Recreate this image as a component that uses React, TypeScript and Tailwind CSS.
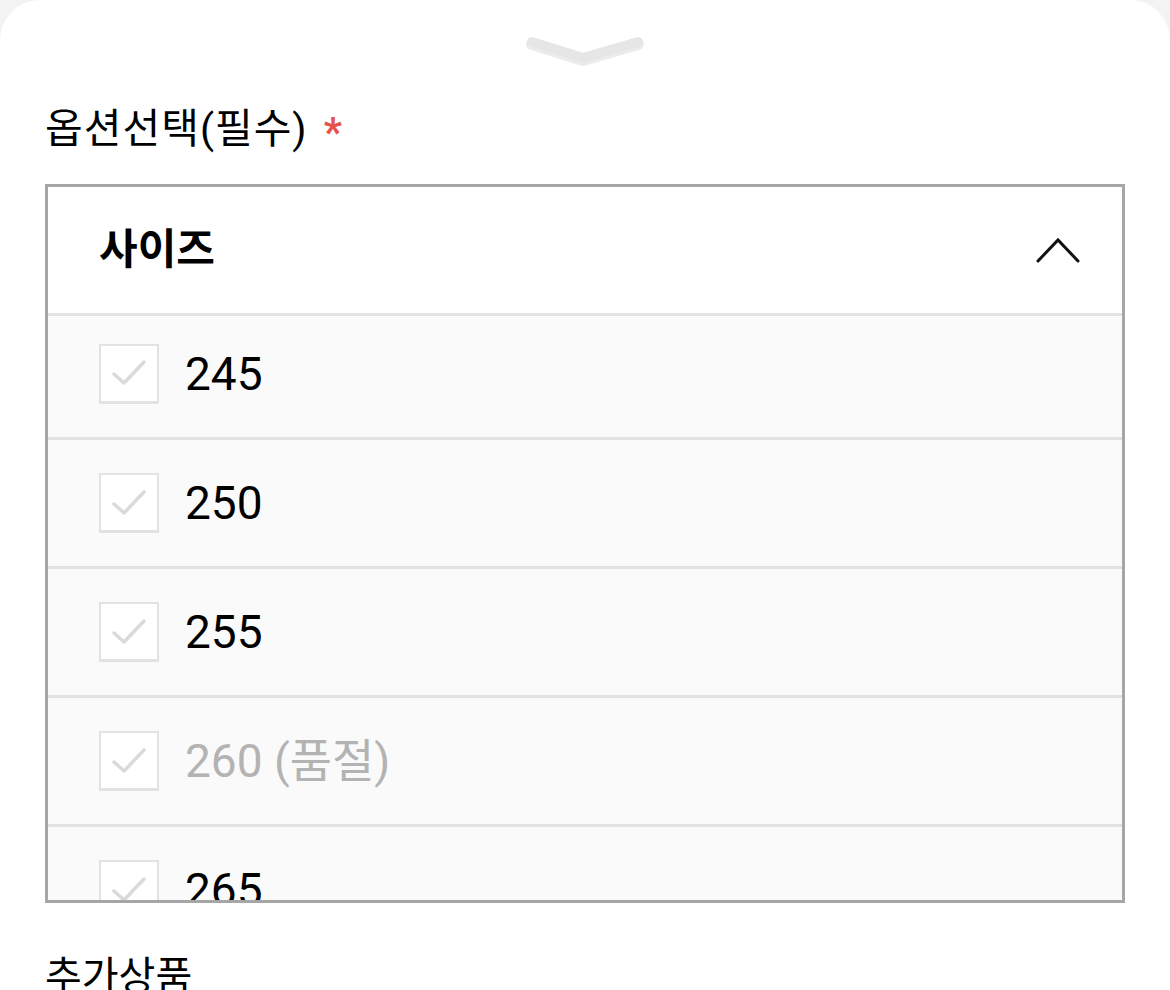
import React from "react";

type Option = {
  label: string;
  soldOut?: boolean;
};

const OPTIONS: Option[] = [
  { label: "245" },
  { label: "250" },
  { label: "255" },
  { label: "260 (품절)", soldOut: true },
  { label: "265" },
  { label: "270" },
];

const FONT = "font-['Roboto','Noto_Sans_CJK_KR',sans-serif]";

function Handle() {
  return (
    <div className="flex h-[90px] justify-center pt-[32px]">
      <svg width="120" height="40" viewBox="0 0 120 40" fill="none">
        <polyline
          points="7,10 58,26 113,10"
          stroke="#ececec"
          strokeWidth="12"
          strokeLinecap="round"
          strokeLinejoin="round"
          transform="translate(0,2)"
        />
        <polyline
          points="7,10 58,26 113,10"
          stroke="#e6e6e6"
          strokeWidth="10"
          strokeLinecap="round"
          strokeLinejoin="round"
        />
      </svg>
    </div>
  );
}

function CheckBox() {
  return (
    <div className="flex h-[60px] w-[60px] shrink-0 items-center justify-center border-2 border-b-[3px] border-[#e2e2e2] bg-white">
      <svg width="40" height="34" viewBox="0 0 40 34" fill="none">
        <polyline
          points="5,18 15,27 35,6"
          stroke="#dadada"
          strokeWidth="3.5"
          strokeLinecap="round"
          strokeLinejoin="round"
        />
      </svg>
    </div>
  );
}

function OptionRow({ option, first }: { option: Option; first: boolean }) {
  return (
    <li
      className={
        first
          ? "flex h-[121px] items-center gap-[26px] bg-[#fafafa] pb-[6px] pl-[51px]"
          : "flex h-[129px] items-center gap-[26px] border-t-[3px] border-[#e2e2e2] bg-[#fafafa] pl-[51px]"
      }
    >
      <CheckBox />
      <span
        className={
          option.soldOut
            ? "text-[46px] leading-none text-[#b3b3b3]"
            : "text-[46px] leading-none text-black"
        }
      >
        {option.label}
      </span>
    </li>
  );
}

export default function App() {
  return (
    <div className={`min-h-[990px] bg-[#f3f3f3] ${FONT}`}>
      <div className="min-h-[990px] rounded-t-[40px] bg-white px-[45px]">
        <Handle />

        <div className="flex h-[94px] items-start pt-[11px] text-[41px] leading-[56px] tracking-[1px] text-black">
          옵션선택(필수)
          <span className="ml-[16px] mt-[4px] text-[40px] font-bold text-[#e5534b]">*</span>
        </div>

        {/* option select box */}
        <div className="h-[719px] overflow-hidden border-[3px] border-[#a6a6a6]">
          <div className="flex h-[129px] items-center justify-between border-b-[3px] border-[#e2e2e2] pl-[51px] pr-[42px]">
            <span className="text-[42px] font-bold leading-none text-black">사이즈</span>
            <svg width="44" height="26" viewBox="0 0 44 26" fill="none">
              <polyline
                points="2,24 22,3 42,24"
                stroke="#111"
                strokeWidth="3"
                strokeLinecap="round"
                strokeLinejoin="miter"
              />
            </svg>
          </div>
          <ul>
            {OPTIONS.map((o, i) => (
              <OptionRow key={o.label} option={o} first={i === 0} />
            ))}
          </ul>
        </div>

        <div className="pt-[46px] text-[40px] leading-[56px] text-black">추가상품</div>
      </div>
    </div>
  );
}
